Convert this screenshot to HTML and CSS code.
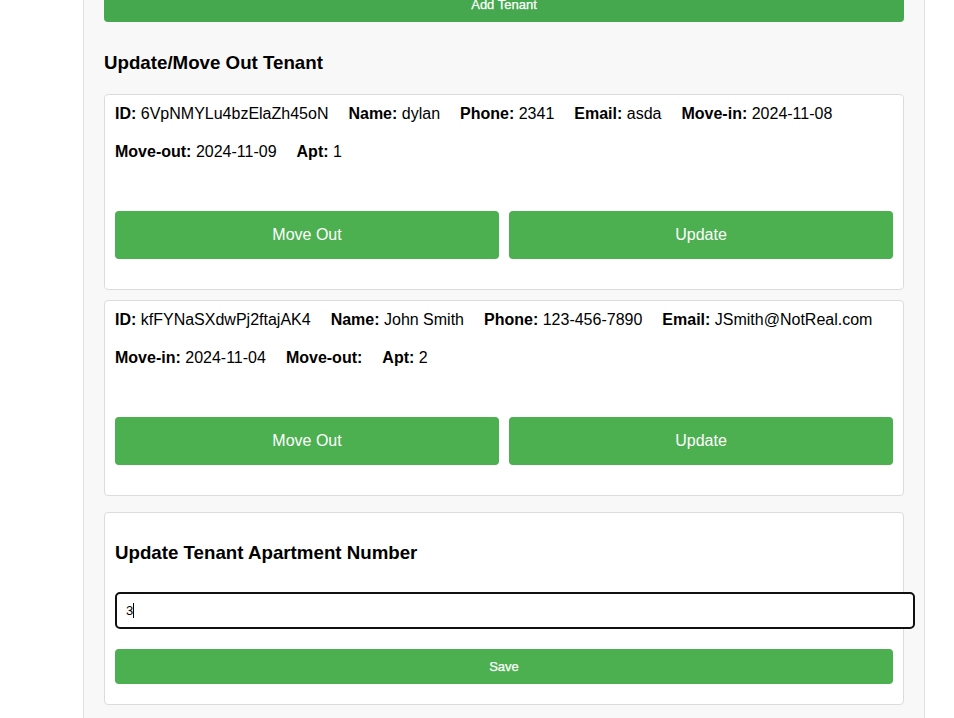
FILE: index.html
```html
<!DOCTYPE html>
<html lang="en">
<head>
<meta charset="utf-8">
<title>Tenants</title>
<link rel="stylesheet" href="styles.css">
</head>
<body>
<div class="panel">
  <button class="btn btn-small btn-hover add-btn">Add Tenant</button>

  <h3 class="section-title">Update/Move Out Tenant</h3>

  <div class="card">
    <div class="info">
      <span><b>ID:</b> 6VpNMYLu4bzElaZh45oN</span>
      <span><b>Name:</b> dylan</span>
      <span><b>Phone:</b> 2341</span>
      <span><b>Email:</b> asda</span>
      <span><b>Move-in:</b> 2024-11-08</span>
      <span><b>Move-out:</b> 2024-11-09</span>
      <span><b>Apt:</b> 1</span>
    </div>
    <div class="actions">
      <button class="btn btn-large">Move Out</button>
      <button class="btn btn-large">Update</button>
    </div>
  </div>

  <div class="card">
    <div class="info">
      <span><b>ID:</b> kfFYNaSXdwPj2ftajAK4</span>
      <span><b>Name:</b> John Smith</span>
      <span><b>Phone:</b> 123-456-7890</span>
      <span><b>Email:</b> JSmith@NotReal.com</span>
      <span><b>Move-in:</b> 2024-11-04</span>
      <span><b>Move-out:</b> </span>
      <span><b>Apt:</b> 2</span>
    </div>
    <div class="actions">
      <button class="btn btn-large">Move Out</button>
      <button class="btn btn-large">Update</button>
    </div>
  </div>

  <div class="card form-card">
    <h3 class="form-title">Update Tenant Apartment Number</h3>
    <div class="field"><span class="value">3</span><span class="caret"></span></div>
    <button class="btn btn-small save-btn">Save</button>
  </div>
</div>
</body>
</html>
```

FILE: styles.css
```css
html, body {
  margin: 0;
  padding: 0;
  background: #ffffff;
  font-family: "Liberation Sans", Arial, sans-serif;
  color: #000;
  overflow: hidden;
}

.panel {
  margin-left: 83px;
  width: 800px;
  padding: 0 20px 40px;
  background: #f8f8f8;
  border-left: 1px solid #e2e2e2;
  border-right: 1px solid #e2e2e2;
  min-height: 760px;
}

.btn {
  display: block;
  border: none;
  border-radius: 4px;
  background: #4caf50;
  color: #fff;
  font-family: "Liberation Sans", Arial, sans-serif;
  cursor: pointer;
  text-align: center;
}

.btn-small {
  width: 100%;
  padding: 10px;
  font-size: 13px;
  line-height: 15px;
  font-weight: normal;
  -webkit-text-stroke: 0.25px #fff;
}

.btn-hover {
  background: #45a74e;
}

.add-btn {
  margin-top: -13px;
}

.section-title {
  margin: 30px 0 20px;
  font-size: 18.72px;
  font-weight: bold;
}

.card {
  background: #fff;
  border: 1px solid #dcdcdc;
  border-radius: 4px;
  padding: 10px;
  margin-bottom: 10px;
}

.info {
  display: flex;
  flex-wrap: wrap;
  gap: 20px;
  font-size: 16px;
  line-height: 18px;
}

.actions {
  display: flex;
  gap: 10px;
  margin-top: 50px;
  margin-bottom: 20px;
}

.btn-large {
  flex: 1;
  padding: 15px;
  font-size: 16px;
  line-height: 18px;
  font-weight: normal;
}

.form-card {
  margin-top: 16px;
}

.form-title {
  margin: 19px 0 28px;
  font-size: 18.72px;
  font-weight: bold;
}

.field {
  width: 778px;
  height: 33px;
  padding: 0 9px;
  border: 2px solid #101010;
  border-radius: 5px;
  font-size: 13px;
  display: flex;
  align-items: center;
  margin-bottom: 20px;
  background: #fff;
}

.caret {
  display: inline-block;
  width: 1px;
  height: 15px;
  background: #000;
}

.save-btn {
  margin-bottom: 10px;
}
```
